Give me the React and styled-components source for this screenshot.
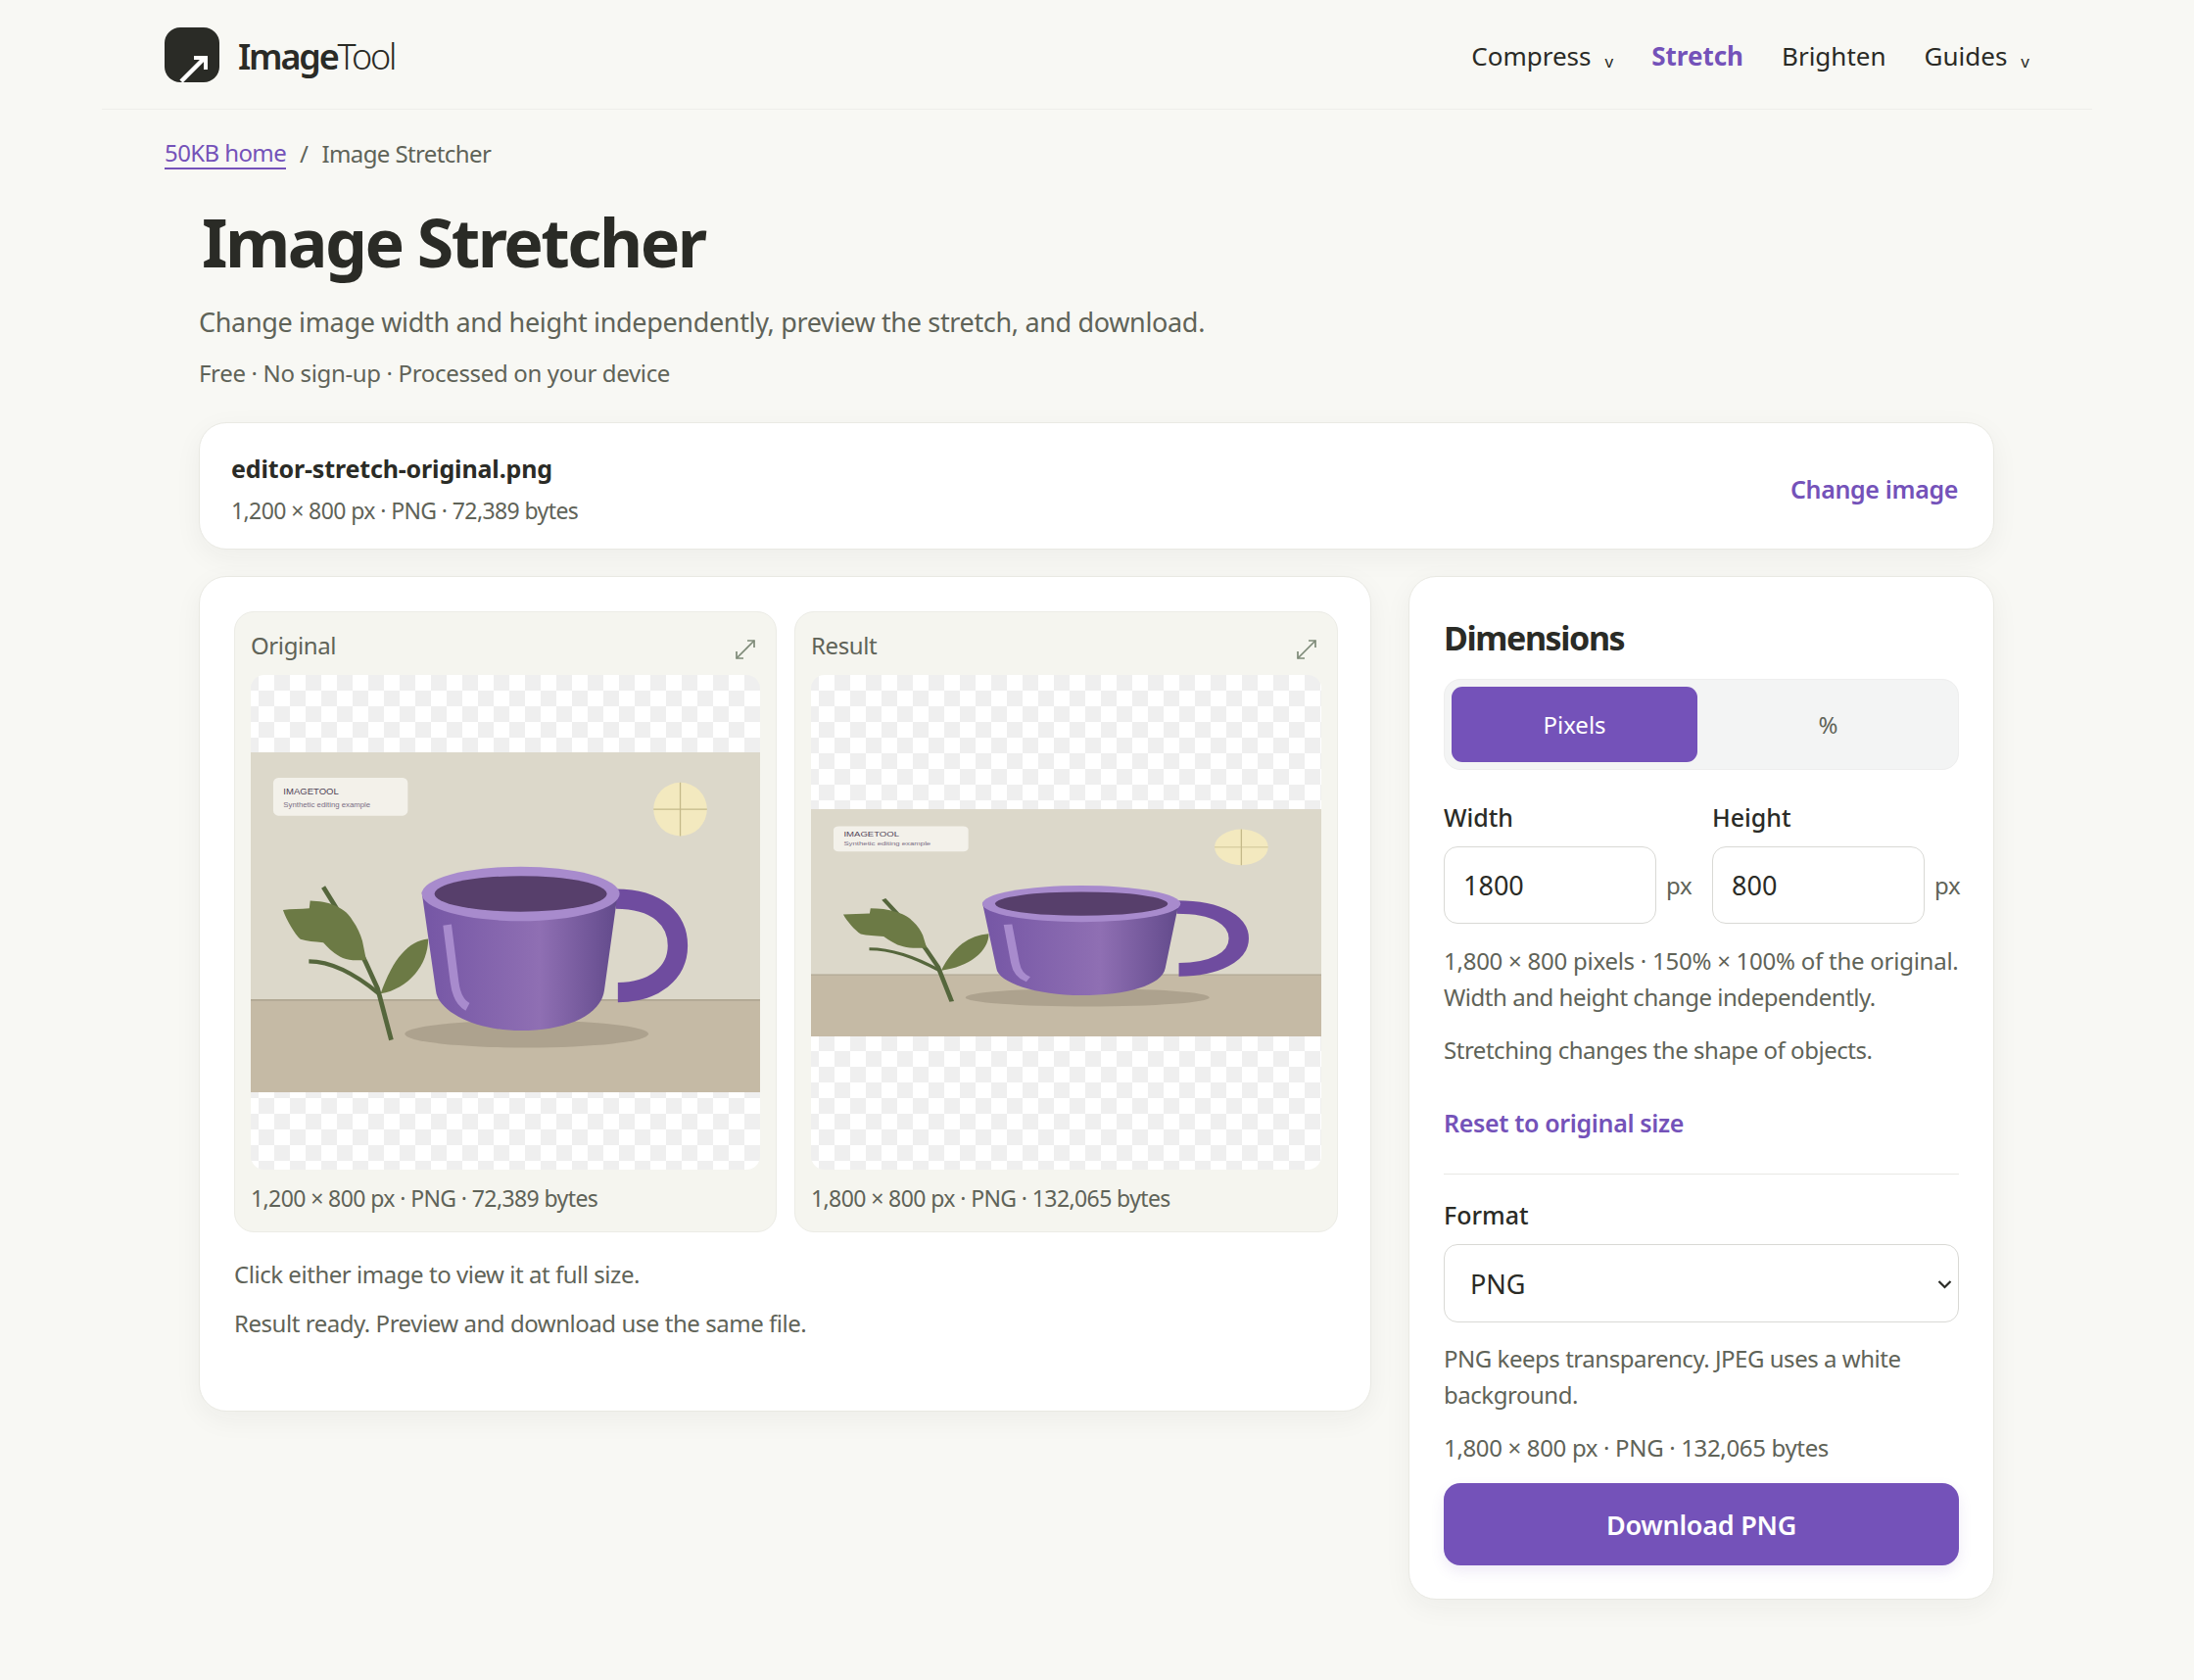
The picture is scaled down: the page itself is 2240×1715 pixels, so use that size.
import React from 'react'
import styled, { createGlobalStyle } from 'styled-components';

const GlobalStyle = createGlobalStyle`
    * { box-sizing:border-box; }
    body {
        margin:0;
        background:#f8f8f4;
        color:#2a2b26;
        font-family:"Noto Sans","Open Sans",sans-serif;
    }
`;

const Shell = styled.div`
    width:2032px;
    margin:0 auto;
    padding-bottom:82px;
`;

const Header = styled.header`
    height:112px;
    padding:0 64px;
    display:flex;
    justify-content:space-between;
    align-items:center;
    border-bottom:1px solid #eeeeea;
`;

const Brand = styled.a`
    display:flex;
    align-items:center;
    gap:19px;
    font-size:36px;
    letter-spacing:-2.2px;
`;

const BrandName = styled.span`
    padding-top:3px;
`;

const BrandStrong = styled.span`
    font-weight:600;
`;

const BrandLight = styled.span`
    font-weight:300;
`;

const Nav = styled.nav`
    display:flex;
    align-items:center;
    gap:39px;
    margin-top:2px;
`;

const NavItem = styled.a`
    display:flex;
    align-items:baseline;
    gap:14px;
    font-size:26px;
    font-weight:${props=>props.active?700:400};
    color:${props=>props.active?'#7452b9':'#2a2b26'};
`;

const NavCaret = styled.span`
    font-size:17px;
    position:relative;
    top:2px;
`;

const Breadcrumb = styled.div`
    padding:0 64px;
    margin-top:24px;
    height:40px;
    display:flex;
    align-items:center;
    gap:14px;
    font-size:24px;
    letter-spacing:-0.6px;
    color:#5f6358;
`;

const CrumbLink = styled.a`
    color:#7452b9;
    border-bottom:2px solid #7452b9;
    line-height:31px;
`;

const Content = styled.main`
    padding:0 100px 0 99px;
`;

const Title = styled.h1`
    margin:26px 0 0 3px;
    font-size:68px;
    line-height:90px;
    font-weight:700;
    letter-spacing:-2.5px;
`;

const Lead = styled.p`
    margin:15px 0 0;
    font-size:27px;
    line-height:44px;
    letter-spacing:-0.34px;
    color:#5f6358;
`;

const Promise = styled.p`
    margin:12px 0 0;
    font-size:24px;
    line-height:36px;
    letter-spacing:-0.34px;
    color:#5f6358;
`;

const Card = styled.section`
    background:#ffffff;
    border:1px solid #e9e9e3;
    border-radius:28px;
    box-shadow:0 8px 28px rgba(40,40,30,0.05);
`;

const FileCard = styled(Card)`
    margin-top:32px;
    height:130px;
    padding:5px 36px 0 32px;
    display:flex;
    justify-content:space-between;
    align-items:center;
`;

const FileName = styled.div`
    font-size:25px;
    line-height:40px;
    letter-spacing:-0.15px;
    font-weight:700;
`;

const Meta = styled.div`
    font-size:23px;
    line-height:36px;
    letter-spacing:-0.6px;
    color:#5f6358;
    margin-top:5px;
`;

const TextAction = styled.a`
    font-size:25px;
    letter-spacing:-0.35px;
    font-weight:600;
    color:#7452b9;
`;

const Workspace = styled.div`
    margin-top:27px;
    display:grid;
    grid-template-columns:1197px 598px;
    gap:38px;
    align-items:start;
`;

const PreviewCard = styled(Card)`
    height:853px;
    padding:35px;
`;

const Panels = styled.div`
    display:grid;
    grid-template-columns:554px 555px;
    gap:18px;
`;

const Panel = styled.figure`
    margin:0;
    height:634px;
    padding:0 16px;
    background:#f5f5ef;
    border:1px solid #ecece6;
    border-radius:20px;
`;

const PanelHead = styled.div`
    height:64px;
    padding-top:2px;
    display:flex;
    justify-content:space-between;
    align-items:center;
    font-size:24px;
    letter-spacing:-0.4px;
    color:#5f6358;
`;

const ExpandIcon = styled.svg`
    width:22px;
    height:22px;
    margin:10px 4px 0 0;
`;

const Checker = styled.div`
    height:505px;
    display:flex;
    align-items:center;
    border-radius:14px;
    overflow:hidden;
    background:repeating-conic-gradient(#efefef 0 25%, #ffffff 0 50%) 8px 0 / 32px 32px;
`;

const Picture = styled.svg`
    display:block;
    width:100%;
    height:${props=>props.h}px;
`;

const Caption = styled.figcaption`
    margin-top:11px;
    font-size:23px;
    line-height:36px;
    letter-spacing:-0.6px;
    color:#5f6358;
`;

const Note = styled.p`
    margin:${props=>props.top}px 0 0;
    font-size:24px;
    line-height:36px;
    letter-spacing:-0.46px;
    color:#5f6358;
`;

const SideCard = styled(Card)`
    height:1045px;
    padding:34px 35px 0;
`;

const SideTitle = styled.h2`
    margin:0;
    font-size:34px;
    line-height:56px;
    font-weight:700;
    letter-spacing:-1.4px;
`;

const Segmented = styled.div`
    margin-top:14px;
    height:93px;
    padding:7px;
    display:grid;
    grid-template-columns:1fr 1fr;
    gap:8px;
    background:#f3f4f4;
    border:1px solid #eeeeee;
    border-radius:17px;
`;

const SegButton = styled.button`
    border:none;
    border-radius:11px;
    font:inherit;
    font-size:24px;
    background:${props=>props.active?'#7452b9':'transparent'};
    color:${props=>props.active?'#ffffff':'#5f6358'};
`;

const SizeGrid = styled.div`
    margin-top:30px;
    display:grid;
    grid-template-columns:252px 252px;
    gap:22px;
`;

const FieldLabel = styled.label`
    display:block;
    margin-top:${props=>props.top||0}px;
    margin-bottom:12px;
    font-size:25px;
    line-height:36px;
    font-weight:500;
`;

const InputRow = styled.div`
    display:flex;
    align-items:center;
    gap:10px;
    font-size:24px;
    letter-spacing:-0.2px;
    color:#5f6358;
`;

const SizeInput = styled.input`
    width:217px;
    height:79px;
    padding:0 19px;
    border:1px solid #d9d9d5;
    border-radius:14px;
    background:#ffffff;
    color:#2a2b26;
    font:inherit;
    font-size:27px;
`;

const Help = styled.p`
    margin:${props=>props.top||0}px 0 0;
    font-size:24px;
    line-height:37px;
    letter-spacing:-0.47px;
    color:#5f6358;
`;

// lines with a × in them run a little wider than plain text
const WideLine = styled.span`
    letter-spacing:${props=>props.spacing||-0.25}px;
`;

const ResetRow = styled.div`
    margin-top:34px;
    padding-bottom:26px;
    border-bottom:1px solid #e8e8e4;
    line-height:44px;
`;

const SelectWrap = styled.div`
    position:relative;
`;

const FormatSelect = styled.select`
    display:block;
    width:100%;
    height:80px;
    padding:0 26px;
    appearance:none;
    border:1px solid #d9d9d5;
    border-radius:14px;
    background:#ffffff;
    color:#2a2b26;
    font:inherit;
    font-size:27px;
`;

const SelectChevron = styled.svg`
    position:absolute;
    top:36px;
    right:7px;
    width:15px;
    height:10px;
    pointer-events:none;
`;

const DownloadButton = styled.button`
    display:block;
    width:100%;
    height:84px;
    margin-top:18px;
    border:none;
    border-radius:17px;
    background:#7452b9;
    color:#ffffff;
    font:inherit;
    font-size:27px;
    letter-spacing:-0.25px;
    font-weight:600;
    box-shadow:0 6px 14px rgba(116,82,185,0.12);
`;

const LogoMark = () => (
    <svg width="56" height="56" viewBox="0 0 56 56">
        <rect width="56" height="56" rx="16" fill="#2a2b26"/>
        <path d="M17 55 L40 32" stroke="#fff" strokeWidth="4.5" fill="none"/>
        <path d="M30 31 H42 V43" stroke="#fff" strokeWidth="4" fill="none"/>
    </svg>
);

const Expand = () => (
    <ExpandIcon viewBox="0 0 22 22" fill="none" stroke="#7e8a78" strokeWidth="1.7">
        <path d="M2 20 L20 2"/>
        <path d="M13 2 H20 V9"/>
        <path d="M2 13 V20 H9"/>
    </ExpandIcon>
);

// the sample picture, drawn on 1200x800 and squeezed into whatever box it gets
const SamplePicture = ({id,h}) => (
    <Picture h={h} viewBox="0 0 1200 800" preserveAspectRatio="none">
        <defs>
            <linearGradient id={id} x1="0" x2="1" y1="0" y2="0">
                <stop offset="0" stopColor="#7556a5"/>
                <stop offset="0.6" stopColor="#8f6fb3"/>
                <stop offset="1" stopColor="#624a8b"/>
            </linearGradient>
        </defs>
        <rect width="1200" height="800" fill="#dcd8ca"/>
        <rect y="583" width="1200" height="217" fill="#c5baa5"/>
        <rect y="581" width="1200" height="4" fill="#b0a793"/>
        <rect x="53" y="60" width="317" height="89" rx="12" fill="#f3f1ea"/>
        <text x="77" y="98" fontFamily="Liberation Sans" fontSize="22" fill="#4f4356">IMAGETOOL</text>
        <text x="77" y="128" fontFamily="Liberation Sans" fontSize="18" fill="#7b6f85">Synthetic editing example</text>
        <ellipse cx="1012" cy="134" rx="63" ry="63" fill="#f3e9bf"/>
        <path d="M1012 71 V197 M949 134 H1075" stroke="#c4b98a" strokeWidth="3"/>
        <ellipse cx="650" cy="663" rx="287" ry="32" fill="#ada28e"/>
        <path d="M418 439 C372 444 335 484 306 568 C372 556 418 500 418 439 Z" fill="#6c7a45"/>
        <path d="M171 317 C215 385 262 470 299 556 L331 677" stroke="#55663c" strokeWidth="11" fill="none"/>
        <path d="M76 371 C95 368 118 369 138 367 L140 349 C160 350 182 352 199 361 C222 372 232 382 240 396 C252 412 258 428 263 444 L272 488 C250 490 232 490 217 484 C198 476 184 462 171 448 C150 446 132 445 117 440 C104 428 84 394 76 371 Z" fill="#6c7a45"/>
        <path d="M137 492 C190 492 250 525 302 568" stroke="#55663c" strokeWidth="10" fill="none"/>
        <path d="M860 345 C960 345 1006 395 1006 455 C1006 520 950 565 865 565" stroke="#6f4c9f" strokeWidth="47" fill="none"/>
        <path d="M403 329 L436 560 C440 610 530 655 636 655 C742 655 825 620 833 560 L865 329 Z" fill={`url(#${id})`}/>
        <ellipse cx="636" cy="333" rx="233" ry="64" fill="#a88bcd"/>
        <ellipse cx="636" cy="333" rx="203" ry="42" fill="#573f6b"/>
        <path d="M463 406 L480 540 C484 572 494 590 511 599" stroke="#a88bcd" strokeWidth="20" fill="none"/>
    </Picture>
);

const App = () => {
    return(
        <>
            <GlobalStyle/>
            <Shell>
                <Header>
                    <Brand>
                        <LogoMark/>
                        <BrandName><BrandStrong>Image</BrandStrong><BrandLight>Tool</BrandLight></BrandName>
                    </Brand>
                    <Nav>
                        <NavItem>Compress <NavCaret>v</NavCaret></NavItem>
                        <NavItem active>Stretch</NavItem>
                        <NavItem>Brighten</NavItem>
                        <NavItem>Guides <NavCaret>v</NavCaret></NavItem>
                    </Nav>
                </Header>
                <Breadcrumb>
                    <CrumbLink>50KB home</CrumbLink>
                    <span>/</span>
                    <span>Image Stretcher</span>
                </Breadcrumb>
                <Content>
                    <Title>Image Stretcher</Title>
                    <Lead>Change image width and height independently, preview the stretch, and download.</Lead>
                    <Promise>Free · No sign-up · Processed on your device</Promise>
                    <FileCard>
                        <div>
                            <FileName>editor-stretch-original.png</FileName>
                            <Meta>1,200 × 800 px · PNG · 72,389 bytes</Meta>
                        </div>
                        <TextAction>Change image</TextAction>
                    </FileCard>
                    <Workspace>
                        <PreviewCard>
                            <Panels>
                                <Panel>
                                    <PanelHead>Original<Expand/></PanelHead>
                                    <Checker><SamplePicture id="cup-a" h={347}/></Checker>
                                    <Caption>1,200 × 800 px · PNG · 72,389 bytes</Caption>
                                </Panel>
                                <Panel>
                                    <PanelHead>Result<Expand/></PanelHead>
                                    <Checker><SamplePicture id="cup-b" h={232}/></Checker>
                                    <Caption>1,800 × 800 px · PNG · 132,065 bytes</Caption>
                                </Panel>
                            </Panels>
                            <Note top={25}>Click either image to view it at full size.</Note>
                            <Note top={14}>Result ready. Preview and download use the same file.</Note>
                        </PreviewCard>
                        <SideCard>
                            <SideTitle>Dimensions</SideTitle>
                            <Segmented>
                                <SegButton active>Pixels</SegButton>
                                <SegButton>%</SegButton>
                            </Segmented>
                            <SizeGrid>
                                <div>
                                    <FieldLabel>Width</FieldLabel>
                                    <InputRow><SizeInput defaultValue="1800"/>px</InputRow>
                                </div>
                                <div>
                                    <FieldLabel>Height</FieldLabel>
                                    <InputRow><SizeInput defaultValue="800"/>px</InputRow>
                                </div>
                            </SizeGrid>
                            <Help top={19}><WideLine>1,800 × 800 pixels · 150% × 100% of the original.</WideLine><br/>Width and height change independently.</Help>
                            <Help top={17}>Stretching changes the shape of objects.</Help>
                            <ResetRow><TextAction>Reset to original size</TextAction></ResetRow>
                            <FieldLabel top={23}>Format</FieldLabel>
                            <SelectWrap>
                                <FormatSelect defaultValue="PNG"><option>PNG</option><option>JPEG</option></FormatSelect>
                                <SelectChevron viewBox="0 0 15 10" fill="none" stroke="#2a2b26" strokeWidth="2.2"><path d="M1.5 2 L7.5 8 L13.5 2"/></SelectChevron>
                            </SelectWrap>
                            <Help top={18}>PNG keeps transparency. JPEG uses a white background.</Help>
                            <Help top={17}><WideLine spacing={-0.34}>1,800 × 800 px · PNG · 132,065 bytes</WideLine></Help>
                            <DownloadButton>Download PNG</DownloadButton>
                        </SideCard>
                    </Workspace>
                </Content>
            </Shell>
        </>
    );
}

export default App;
